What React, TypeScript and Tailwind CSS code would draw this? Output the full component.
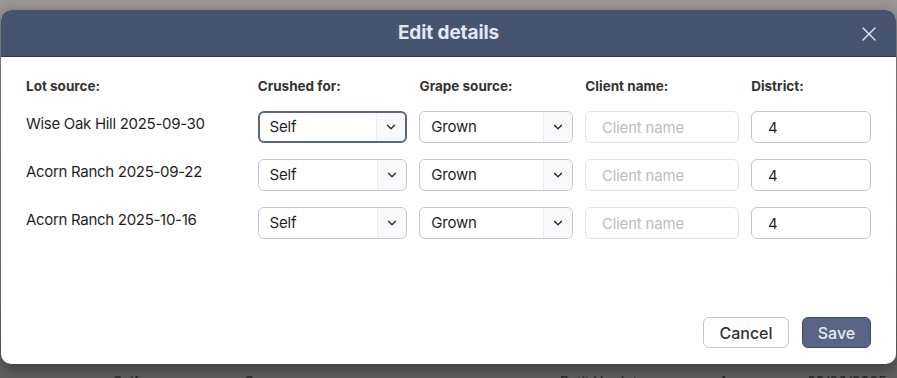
import { ChevronDown, X } from "lucide-react";

const rows = [
    { lot: "Wise Oak Hill 2025-09-30", focused: true },
    { lot: "Acorn Ranch 2025-09-22", focused: false },
    { lot: "Acorn Ranch 2025-10-16", focused: false },
];

function SelectBox({ value, width, focused }: { value: string; width: string; focused?: boolean }) {
    return (
        <div
            className={`flex h-8 items-stretch rounded-md bg-white ${width} ${
                focused ? "border-2 border-[#5b6681]" : "border border-[#c4c7cc]"
            }`}
        >
            <span className={`flex flex-1 items-center text-[15px] tracking-[-0.2px] text-[#1f1f1f] ${focused ? "pl-[10px]" : "pl-[11px]"}`}>{value}</span>
            <span className="flex w-[29px] items-center justify-center rounded-r-md border-l border-[#eceef2] bg-[#f8f9fb]">
                <ChevronDown className="h-[14px] w-[14px] text-[#333]" strokeWidth={2.5} />
            </span>
        </div>
    );
}

export default function App() {
    return (
        <div className="flex h-[378px] w-[897px] flex-col overflow-hidden bg-gradient-to-b from-[#9a9894] from-[5%] via-[#7c7b79] via-[80%] to-[#5e5e5e] px-[1px] pt-[10px]" style={{ fontFamily: "Inter, 'Liberation Sans', sans-serif" }}>
            <div className="flex h-[354px] shrink-0 flex-col overflow-hidden rounded-[10px] bg-white shadow-[0_4px_14px_rgba(0,0,0,0.45)]">
                {/* header */}
                <div className="relative flex h-[47px] shrink-0 items-center justify-center border-b border-[#2f3850] bg-[#475470]">
                    <h2 className="text-[19px] font-bold tracking-[-0.1px] text-[#e3e7f0]">Edit details</h2>
                    <button className="absolute right-[15px] top-[12px] text-[#e3e7f0]">
                        <X className="h-6 w-6" strokeWidth={1.4} />
                    </button>
                </div>

                {/* body */}
                <div className="flex flex-1 flex-col px-[25px] pt-[19px]">
                    <div className="flex gap-3 text-[13.5px] font-bold text-[#333]">
                        <span className="w-[220px]">Lot source:</span>
                        <span className="w-[150px]">Crushed for:</span>
                        <span className="w-[154px]">Grape source:</span>
                        <span className="w-[154px]">Client name:</span>
                        <span className="w-[120px]">District:</span>
                    </div>

                    <div className="mt-[15px] flex flex-col gap-4">
                        {rows.map((r) => (
                            <div key={r.lot} className="flex items-start gap-3">
                                <span className="w-[220px] pt-[2px] text-[15px] tracking-[-0.3px] text-[#1f1f1f]">{r.lot}</span>
                                <SelectBox value="Self" width="w-[150px]" focused={r.focused} />
                                <SelectBox value="Grown" width="w-[154px]" />
                                <input
                                    placeholder="Client name"
                                    className="h-8 w-[154px] rounded-md border border-[#e2e3e6] px-[16px] text-[15px] tracking-[-0.2px] outline-none placeholder:text-[#bdbdbd]"
                                />
                                <input
                                    defaultValue="4"
                                    className="h-8 w-[120px] rounded-md border border-[#c4c7cc] px-[16px] text-[15px] text-[#1f1f1f] outline-none"
                                />
                            </div>
                        ))}
                    </div>

                    <div className="mt-auto mb-[16px] flex justify-end gap-[13px]">
                        <button className="h-[31px] w-[86px] rounded-md border border-[#c4c7cc] bg-white text-[16px] font-medium text-[#333]">
                            Cancel
                        </button>
                        <button className="h-[31px] w-[69px] rounded-md border border-[#3f4966] bg-[#5a6485] text-[16px] font-medium text-[#e8ebf3]">
                            Save
                        </button>
                    </div>
                </div>
            </div>

            {/* table behind the overlay */}
            <div className="relative mt-[7px] h-[20px] shrink-0 text-[14px] text-[#222]">
                <span className="absolute left-[112px] top-0">Self</span>
                <span className="absolute left-[243px] top-0">Grown</span>
                <span className="absolute left-[559px] top-0">Petit Verdot</span>
                <span className="absolute left-[717px] top-0">4</span>
                <span className="absolute left-[806px] top-0">09/30/2025</span>
            </div>
        </div>
    );
}
